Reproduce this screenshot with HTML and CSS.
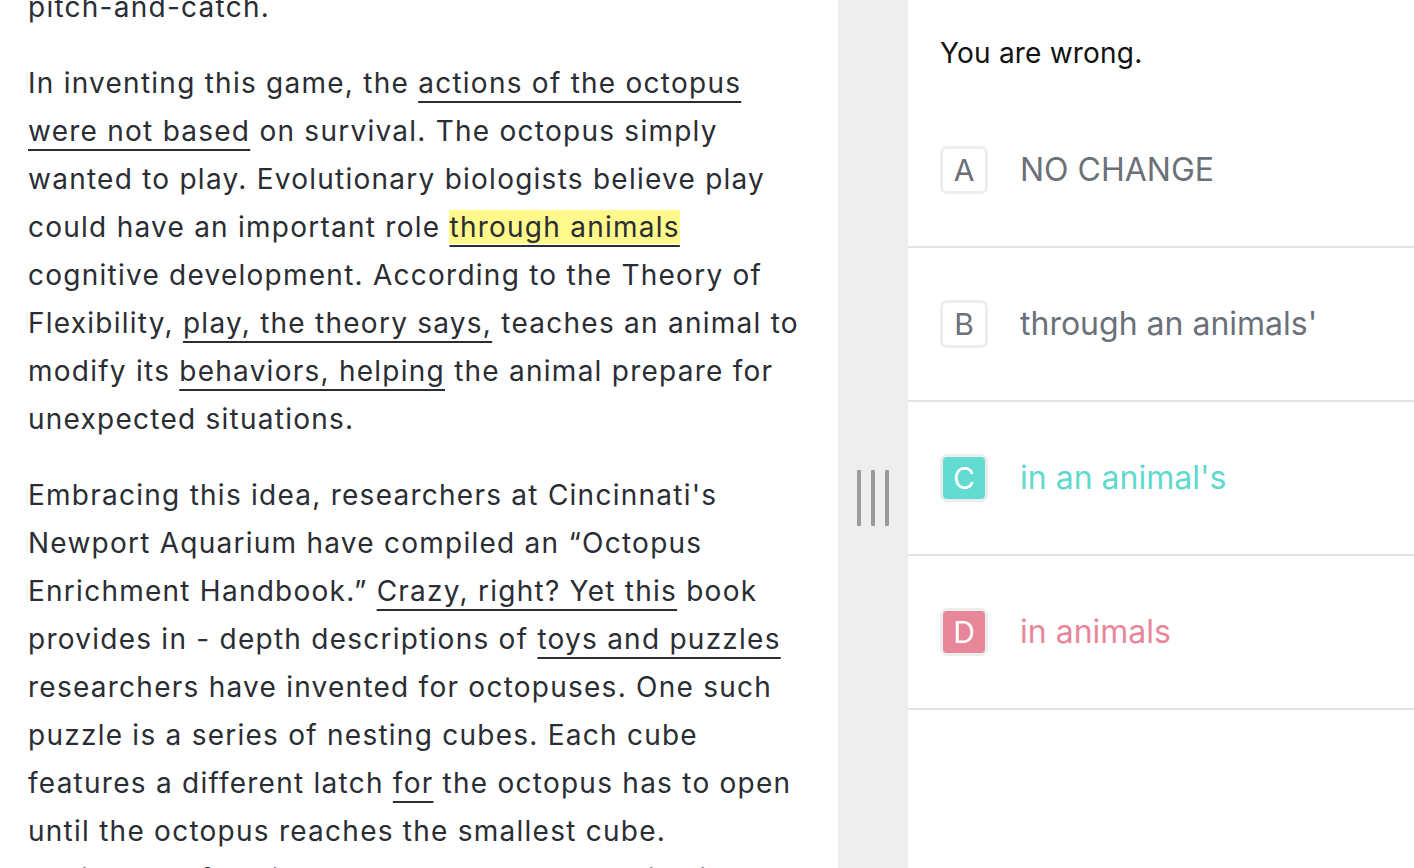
FILE: index.html
```html
<!DOCTYPE html>
<html>
<head>
<meta charset="utf-8">
<link rel="stylesheet" href="styles.css">
</head>
<body>
<div class="app">
  <section class="passage">
    <p class="para first">pitch-and-catch.</p>
    <p class="para">In inventing this game, the <span class="u">actions of the octopus were not based</span> on survival. The octopus simply wanted to play. Evolutionary biologists believe play could have an important role <span class="u hl">through animals</span> cognitive development. According to the Theory of Flexibility, <span class="u">play, the theory says,</span> teaches an animal to modify its <span class="u">behaviors, helping</span> the animal prepare for unexpected situations.</p>
    <p class="para">Embracing this idea, researchers at Cincinnati's Newport Aquarium have compiled an “Octopus Enrichment Handbook.” <span class="u">Crazy, right? Yet this</span> book provides in - depth descriptions of <span class="u">toys and puzzles</span> researchers have invented for octopuses. One such puzzle is a series of nesting cubes. Each cube features a different latch <span class="u">for</span> the octopus has to open until the octopus reaches the smallest cube. Typically, a few times a week, the octopus is given a new toy.</p>
  </section>
  <div class="divider">
    <div class="grip"><span></span><span></span><span></span></div>
  </div>
  <section class="answers">
    <div class="feedback">You are wrong.</div>
    <ul class="options">
      <li class="option"><span class="letter">A</span><span class="text">NO CHANGE</span></li>
      <li class="option"><span class="letter">B</span><span class="text">through an animals'</span></li>
      <li class="option correct"><span class="letter">C</span><span class="text">in an animal's</span></li>
      <li class="option wrong"><span class="letter">D</span><span class="text">in animals</span></li>
    </ul>
  </section>
</div>
</body>
</html>
```
FILE: styles.css
```css
* { box-sizing: border-box; }
html, body {
  margin: 0;
  padding: 0;
  height: 100%;
  overflow: hidden;
  background: #fff;
  font-family: Inter, "Noto Sans", sans-serif;
}
.app {
  display: flex;
  height: 868px;
  width: 1414px;
}
.passage {
  width: 838px;
  flex: none;
  padding: 0 30px 0 28px;
  overflow: hidden;
  color: #2a2d33;
  font-size: 28px;
  line-height: 48px;
  letter-spacing: 1.25px;
}
.para {
  margin: 0 0 28px 0;
}
.para.first {
  margin-top: -17px;
}
.u {
  text-decoration: underline;
  text-decoration-thickness: 2px;
  text-underline-offset: 8px;
  text-decoration-color: #2a2d33;
}
.hl {
  background: #fff98c;
}
.divider {
  width: 70px;
  flex: none;
  background: #eeeeee;
  display: flex;
  align-items: flex-start;
  justify-content: center;
  padding-top: 470px;
}
.grip {
  display: flex;
  gap: 10px;
}
.grip span {
  width: 4px;
  height: 56px;
  background: #9b9b9b;
  border-radius: 1px;
}
.answers {
  flex: 1;
  min-width: 0;
}
.feedback {
  padding: 32px 0 0 32px;
  height: 94px;
  font-size: 28px;
  line-height: 42px;
  color: #111;
  letter-spacing: 0.2px;
}
.options {
  list-style: none;
  margin: 0;
  padding: 0;
}
.option {
  height: 154px;
  border-bottom: 2px solid #dfe3e7;
  display: flex;
  align-items: center;
  padding-left: 32px;
  color: #6b7079;
}
.letter {
  width: 48px;
  height: 48px;
  border: 3px solid #eeeeee;
  border-radius: 7px;
  display: flex;
  align-items: center;
  justify-content: center;
  font-size: 30px;
  line-height: 1;
  margin-right: 32px;
  flex: none;
}
.text {
  font-size: 32px;
  line-height: 40px;
}
.option.correct { color: #5fd9cd; }
.option.correct .letter { background: #62dbd0; color: #fff; }
.option.wrong { color: #e8879a; }
.option.wrong .letter { background: #e8879a; color: #fff; }
```
